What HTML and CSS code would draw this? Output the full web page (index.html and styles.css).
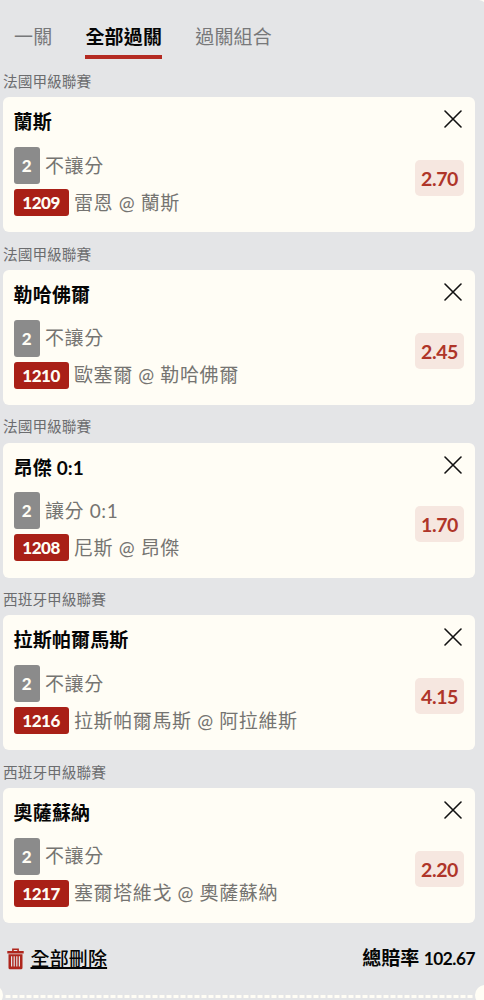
FILE: index.html
```
<!DOCTYPE html>
<html lang="zh-Hant">
<head>
<meta charset="utf-8">
<title>全部過關</title>
<link rel="stylesheet" href="styles.css">
</head>
<body>
<main class="slip">
  <nav class="tabs">
    <a class="tab">一關</a>
    <a class="tab tab-active">全部過關</a>
    <a class="tab">過關組合</a>
  </nav>

  <section class="group">
    <div class="league">法國甲級聯賽</div>
    <article class="card">
      <div class="info">
        <h2 class="pick">蘭斯</h2>
        <div class="market"><span class="count">2</span><span class="text">不讓分</span></div>
        <div class="match"><span class="code">1209</span><span class="text">雷恩 @ 蘭斯</span></div>
      </div>
      <div class="side">
        <svg class="close" viewBox="0 0 18 18"><path d="M1 1L17 17M17 1L1 17"/></svg>
        <span class="odds">2.70</span>
      </div>
    </article>
  </section>

  <section class="group">
    <div class="league">法國甲級聯賽</div>
    <article class="card">
      <div class="info">
        <h2 class="pick">勒哈佛爾</h2>
        <div class="market"><span class="count">2</span><span class="text">不讓分</span></div>
        <div class="match"><span class="code">1210</span><span class="text">歐塞爾 @ 勒哈佛爾</span></div>
      </div>
      <div class="side">
        <svg class="close" viewBox="0 0 18 18"><path d="M1 1L17 17M17 1L1 17"/></svg>
        <span class="odds">2.45</span>
      </div>
    </article>
  </section>

  <section class="group">
    <div class="league">法國甲級聯賽</div>
    <article class="card">
      <div class="info">
        <h2 class="pick">昂傑 0:1</h2>
        <div class="market"><span class="count">2</span><span class="text">讓分 0:1</span></div>
        <div class="match"><span class="code">1208</span><span class="text">尼斯 @ 昂傑</span></div>
      </div>
      <div class="side">
        <svg class="close" viewBox="0 0 18 18"><path d="M1 1L17 17M17 1L1 17"/></svg>
        <span class="odds">1.70</span>
      </div>
    </article>
  </section>

  <section class="group">
    <div class="league">西班牙甲級聯賽</div>
    <article class="card">
      <div class="info">
        <h2 class="pick">拉斯帕爾馬斯</h2>
        <div class="market"><span class="count">2</span><span class="text">不讓分</span></div>
        <div class="match"><span class="code">1216</span><span class="text">拉斯帕爾馬斯 @ 阿拉維斯</span></div>
      </div>
      <div class="side">
        <svg class="close" viewBox="0 0 18 18"><path d="M1 1L17 17M17 1L1 17"/></svg>
        <span class="odds">4.15</span>
      </div>
    </article>
  </section>

  <section class="group">
    <div class="league">西班牙甲級聯賽</div>
    <article class="card">
      <div class="info">
        <h2 class="pick">奧薩蘇納</h2>
        <div class="market"><span class="count">2</span><span class="text">不讓分</span></div>
        <div class="match"><span class="code">1217</span><span class="text">塞爾塔維戈 @ 奧薩蘇納</span></div>
      </div>
      <div class="side">
        <svg class="close" viewBox="0 0 18 18"><path d="M1 1L17 17M17 1L1 17"/></svg>
        <span class="odds">2.20</span>
      </div>
    </article>
  </section>

  <footer class="summary">
    <a class="clear">
      <svg class="trash" viewBox="0 0 17 22">
        <path class="trash-line" d="M5.9 3.5V1.3H11.1V3.5"/>
        <path class="trash-fill" fill-rule="evenodd" d="M0.3 3H16.7V5.4H0.3ZM1.5 6.2H15.5V19.8Q15.5 21.3 14 21.3H3Q1.5 21.3 1.5 19.8ZM4 8.3V18.6H5.2V8.3ZM6.6 8.3V18.6H7.8V8.3ZM9.2 8.3V18.6H10.4V8.3ZM11.8 8.3V18.6H13V8.3Z"/>
      </svg>
      <span class="clear-text">全部刪除</span>
    </a>
    <div class="total">總賠率 <span class="total-value">102.67</span></div>
  </footer>
  <svg class="perforation" viewBox="0 0 484 16">
    <circle cx="-7" cy="10" r="10"/>
    <circle cx="485" cy="10" r="10"/>
    <path d="M5.5 11.5H474"/>
  </svg>
  <svg class="corner" viewBox="0 0 5 2"><path d="M0 0H5V2Q3 .3 0 0Z"/></svg>
</main>
</body>
</html>
```
FILE: styles.css
```
* {
  box-sizing: border-box;
}

body {
  margin: 0;
  background: #e4e5e7;
  font-family: Lato, "Noto Sans CJK TC", sans-serif;
  font-size: 19px;
  color: #050505;
}

.slip {
  position: relative;
  width: 484px;
  height: 1000px;
  overflow: hidden;
}

.tabs {
  display: flex;
  gap: 33px;
  height: 66px;
  padding: 16px 0 0 14px;
}

.tab {
  height: 43px;
  line-height: 41px;
  color: #77787a;
  letter-spacing: 0.2px;
  white-space: nowrap;
}

.tab-active {
  border-bottom: 4px solid #b42a22;
  color: #050505;
  font-weight: 700;
}

.group {
  height: 172.65px;
}

.league {
  height: 31.4px;
  padding-left: 3px;
  font-size: 14.7px;
  line-height: 31px;
  color: #6c6d6f;
}

.card {
  display: flex;
  justify-content: space-between;
  width: 472px;
  height: 135px;
  margin-left: 3px;
  padding: 10px 11px 10px 10.6px;
  border-radius: 6px;
  background: #fffdf5;
}

.pick {
  height: 39.8px;
  margin: 0;
  font-size: 19px;
  font-weight: 700;
  line-height: 29px;
  letter-spacing: 0.15px;
}

.market,
.match {
  display: flex;
  align-items: center;
  gap: 5.4px;
  color: #757471;
  letter-spacing: 0.62px;
  white-space: nowrap;
}

.market {
  height: 37px;
}

.match {
  height: 27px;
  margin-top: 5px;
}

.text {
  line-height: 28px;
}

.count,
.code {
  border-radius: 3px;
  color: #fffdf5;
  font-weight: 900;
  text-align: center;
}

.count {
  width: 26px;
  height: 37px;
  background: #8b8b8b;
  font-size: 17px;
  line-height: 37px;
  letter-spacing: 0;
}

.code {
  width: 55px;
  height: 27px;
  background: #a92017;
  font-size: 17px;
  line-height: 28px;
  letter-spacing: -0.4px;
}

.side {
  display: flex;
  flex-direction: column;
  align-items: flex-end;
}

.close {
  width: 18px;
  height: 18px;
  margin: 3px 2px 0 0;
  fill: none;
  stroke: #111;
  stroke-width: 1.6;
  stroke-linecap: round;
}

.odds {
  width: 49px;
  height: 36px;
  margin-top: 32px;
  border-radius: 5px;
  background: #f6e7e0;
  color: #af3529;
  font-size: 19.5px;
  font-weight: 700;
  line-height: 37px;
  letter-spacing: -0.4px;
  text-align: center;
}

.summary {
  display: flex;
  align-items: center;
  justify-content: space-between;
  height: 56px;
  padding: 3px 9px 0 7px;
}

.clear {
  display: flex;
  align-items: center;
  gap: 6.5px;
}

.trash {
  width: 17px;
  height: 22px;
}

.trash-line {
  fill: none;
  stroke: #ae261d;
  stroke-width: 1.6;
}

.trash-fill {
  fill: #ae261d;
}

.clear-text {
  font-weight: 500;
  line-height: 28px;
  letter-spacing: 0.15px;
  text-decoration: underline;
  text-decoration-thickness: 1.5px;
  text-underline-offset: 1px;
  text-decoration-skip-ink: none;
}

.total {
  font-weight: 700;
  line-height: 28px;
}

.total-value {
  font-size: 17.3px;
  letter-spacing: -0.5px;
}

.perforation {
  display: block;
  width: 484px;
  height: 16px;
  fill: #fffdf5;
}

.perforation path {
  stroke: #fffdf5;
  stroke-width: 3;
  stroke-dasharray: 5 2;
}

.corner {
  position: absolute;
  top: 0;
  right: 0;
  width: 5px;
  height: 2px;
  fill: #fffdf5;
}
```
